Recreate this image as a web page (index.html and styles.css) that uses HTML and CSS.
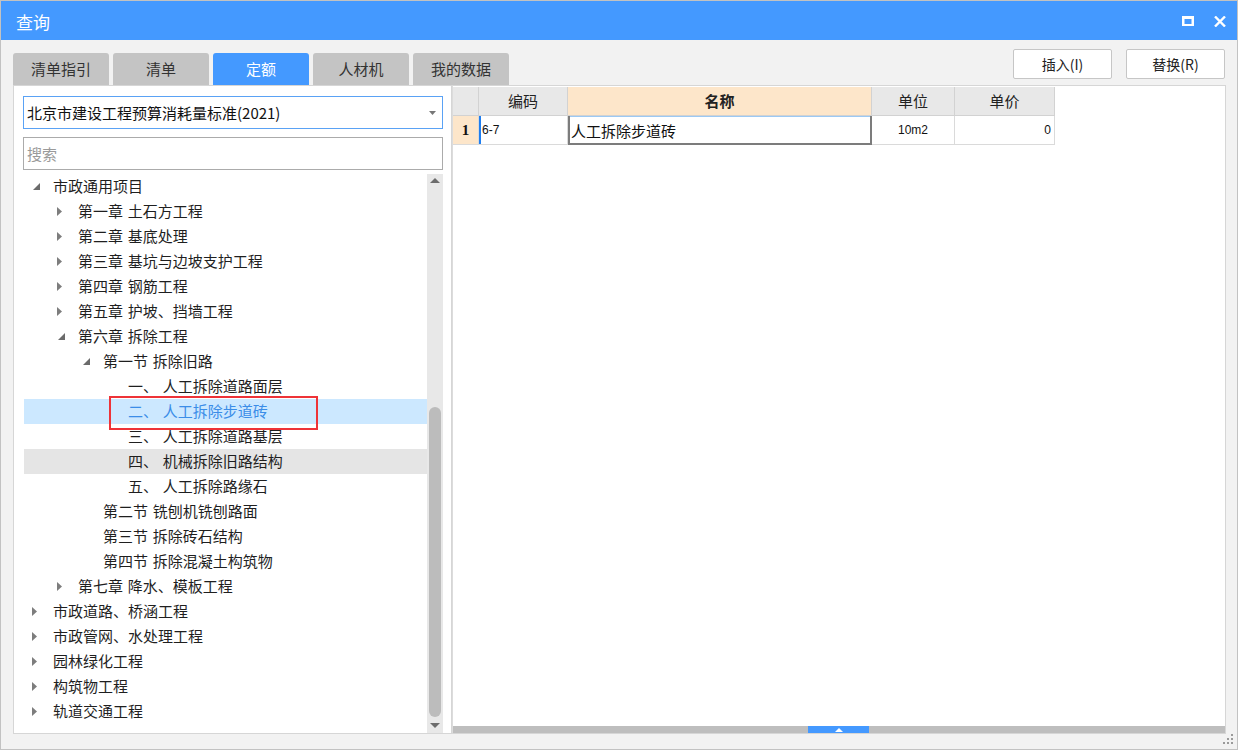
FILE: index.html
```html
<!DOCTYPE html>
<html lang="zh-CN">
<head>
<meta charset="utf-8">
<title>查询</title>
<link rel="stylesheet" href="styles.css">
</head>
<body>
<div class="window">
  <header class="titlebar">
    <span class="title">查询</span>
    <div class="win-ctrls">
      <svg class="ic-max" width="12" height="10" viewBox="0 0 12 10"><path fill="#fff" fill-rule="evenodd" d="M0 0H12V10H0Z M2.5 3H9.5V8H2.5Z"/></svg>
      <svg class="ic-close" width="12" height="11" viewBox="0 0 12 11"><path d="M1 0.5L11 10.5M11 0.5L1 10.5" stroke="#fff" stroke-width="2.4" fill="none"/></svg>
    </div>
  </header>
  <div class="body">
    <div class="toprow">
      <div class="tabs">
        <div class="tab">清单指引</div>
        <div class="tab">清单</div>
        <div class="tab active">定额</div>
        <div class="tab">人材机</div>
        <div class="tab">我的数据</div>
      </div>
      <div class="buttons">
        <div class="btn">插入(I)</div>
        <div class="btn">替换(R)</div>
      </div>
    </div>
    <div class="main">
      <div class="left">
        <div class="select">
          <span>北京市建设工程预算消耗量标准(2021)</span>
          <svg class="caret" width="7" height="4" viewBox="0 0 7 4"><path d="M0 0H7L3.5 4Z" fill="#777"/></svg>
        </div>
        <div class="search">搜索</div>
        <div class="treewrap">
          <div class="tree">
            <div class="row l0"><span class="tw"><svg class="ex" width="7" height="7" viewBox="0 0 7 7"><path d="M7 0V7H0Z" fill="#6b6b6b"/></svg></span>市政通用项目</div>
            <div class="row l1"><span class="tw"><svg class="co" width="5" height="9" viewBox="0 0 5 9"><path d="M0 0L5 4.5L0 9Z" fill="#7d7d7d"/></svg></span>第一章 土石方工程</div>
            <div class="row l1"><span class="tw"><svg class="co" width="5" height="9" viewBox="0 0 5 9"><path d="M0 0L5 4.5L0 9Z" fill="#7d7d7d"/></svg></span>第二章 基底处理</div>
            <div class="row l1"><span class="tw"><svg class="co" width="5" height="9" viewBox="0 0 5 9"><path d="M0 0L5 4.5L0 9Z" fill="#7d7d7d"/></svg></span>第三章 基坑与边坡支护工程</div>
            <div class="row l1"><span class="tw"><svg class="co" width="5" height="9" viewBox="0 0 5 9"><path d="M0 0L5 4.5L0 9Z" fill="#7d7d7d"/></svg></span>第四章 钢筋工程</div>
            <div class="row l1"><span class="tw"><svg class="co" width="5" height="9" viewBox="0 0 5 9"><path d="M0 0L5 4.5L0 9Z" fill="#7d7d7d"/></svg></span>第五章 护坡、挡墙工程</div>
            <div class="row l1"><span class="tw"><svg class="ex" width="7" height="7" viewBox="0 0 7 7"><path d="M7 0V7H0Z" fill="#6b6b6b"/></svg></span>第六章 拆除工程</div>
            <div class="row l2"><span class="tw"><svg class="ex" width="7" height="7" viewBox="0 0 7 7"><path d="M7 0V7H0Z" fill="#6b6b6b"/></svg></span>第一节 拆除旧路</div>
            <div class="row l3"><span class="tw"></span>一、 人工拆除道路面层</div>
            <div class="row l3 sel"><span class="tw"></span>二、 人工拆除步道砖</div>
            <div class="row l3"><span class="tw"></span>三、 人工拆除道路基层</div>
            <div class="row l3 hover"><span class="tw"></span>四、 机械拆除旧路结构</div>
            <div class="row l3"><span class="tw"></span>五、 人工拆除路缘石</div>
            <div class="row l2"><span class="tw"></span>第二节 铣刨机铣刨路面</div>
            <div class="row l2"><span class="tw"></span>第三节 拆除砖石结构</div>
            <div class="row l2"><span class="tw"></span>第四节 拆除混凝土构筑物</div>
            <div class="row l1"><span class="tw"><svg class="co" width="5" height="9" viewBox="0 0 5 9"><path d="M0 0L5 4.5L0 9Z" fill="#7d7d7d"/></svg></span>第七章 降水、模板工程</div>
            <div class="row l0"><span class="tw"><svg class="co" width="5" height="9" viewBox="0 0 5 9"><path d="M0 0L5 4.5L0 9Z" fill="#7d7d7d"/></svg></span>市政道路、桥涵工程</div>
            <div class="row l0"><span class="tw"><svg class="co" width="5" height="9" viewBox="0 0 5 9"><path d="M0 0L5 4.5L0 9Z" fill="#7d7d7d"/></svg></span>市政管网、水处理工程</div>
            <div class="row l0"><span class="tw"><svg class="co" width="5" height="9" viewBox="0 0 5 9"><path d="M0 0L5 4.5L0 9Z" fill="#7d7d7d"/></svg></span>园林绿化工程</div>
            <div class="row l0"><span class="tw"><svg class="co" width="5" height="9" viewBox="0 0 5 9"><path d="M0 0L5 4.5L0 9Z" fill="#7d7d7d"/></svg></span>构筑物工程</div>
            <div class="row l0"><span class="tw"><svg class="co" width="5" height="9" viewBox="0 0 5 9"><path d="M0 0L5 4.5L0 9Z" fill="#7d7d7d"/></svg></span>轨道交通工程</div>
          </div>
          <div class="vscroll">
            <svg class="sa-up" width="10" height="5" viewBox="0 0 10 5"><path d="M0 5H10L5 0Z" fill="#6c6c6c"/></svg>
            <div class="vthumb"></div>
            <svg class="sa-down" width="10" height="5" viewBox="0 0 10 5"><path d="M0 0H10L5 5Z" fill="#6c6c6c"/></svg>
          </div>
          <div class="mark"></div>
        </div>
      </div>
      <div class="right">
        <div class="grid">
          <div class="hc"></div>
          <div class="hc">编码</div>
          <div class="hc hname">名称</div>
          <div class="hc">单位</div>
          <div class="hc">单价</div>
          <div class="dc rn">1</div>
          <div class="dc code">6-7</div>
          <div class="dc name">人工拆除步道砖</div>
          <div class="dc unit">10m2</div>
          <div class="dc price">0</div>
        </div>
        <div class="fill"></div>
        <div class="hscroll">
          <div class="hthumb"><svg width="8" height="4" viewBox="0 0 8 4"><path d="M0 4H8L4 0Z" fill="#fff"/></svg></div>
        </div>
      </div>
    </div>
  </div>
  <svg class="grip" width="11" height="11" viewBox="0 0 11 11">
    <rect x="8" y="0" width="2" height="2" fill="#9a9a9a"/>
    <rect x="4" y="4" width="2" height="2" fill="#9a9a9a"/>
    <rect x="8" y="4" width="2" height="2" fill="#9a9a9a"/>
    <rect x="0" y="8" width="2" height="2" fill="#9a9a9a"/>
    <rect x="4" y="8" width="2" height="2" fill="#9a9a9a"/>
    <rect x="8" y="8" width="2" height="2" fill="#9a9a9a"/>
  </svg>
</div>
</body>
</html>
```
FILE: styles.css
```css
html, body {
  margin: 0;
  padding: 0;
}
body {
  font-family: "Noto Sans CJK SC", "Microsoft YaHei", sans-serif;
  background: #f2f2f2;
}
.window {
  width: 1238px;
  height: 750px;
  box-sizing: border-box;
  border: 1px solid #c2c2c2;
  background: #f2f2f2;
  display: flex;
  flex-direction: column;
  position: relative;
  overflow: hidden;
}
.titlebar {
  height: 39px;
  flex: none;
  background: #4499ff;
  display: flex;
  align-items: center;
  justify-content: space-between;
  padding: 0 11px 0 15px;
}
.title {
  color: #fff;
  font-size: 17px;
  line-height: 20px;
  padding-top: 2px;
}
.win-ctrls {
  display: flex;
  align-items: center;
  gap: 20px;
  padding-top: 1px;
}
.body {
  flex: 1;
  display: flex;
  flex-direction: column;
  padding: 9px 11px 15px 12px;
}
.toprow {
  height: 36px;
  flex: none;
  display: flex;
  justify-content: space-between;
}
.tabs {
  display: flex;
  gap: 4px;
  align-self: flex-end;
}
.tab {
  width: 96px;
  height: 32px;
  background: #c4c4c4;
  border-radius: 3px 3px 0 0;
  font-size: 15px;
  line-height: 20px;
  color: #333;
  display: flex;
  align-items: center;
  justify-content: center;
}
.tab.active {
  background: #4499ff;
  color: #fff;
}
.buttons {
  display: flex;
  gap: 14px;
  align-self: flex-start;
  padding-right: 1px;
}
.btn {
  width: 99px;
  height: 30px;
  box-sizing: border-box;
  border: 1px solid #c6c6c6;
  border-radius: 2px;
  background: #fff;
  font-size: 14px;
  line-height: 18px;
  color: #222;
  display: flex;
  align-items: center;
  justify-content: center;
}
.main {
  display: flex;
  height: 649px;
  flex: none;
}
.left {
  width: 439px;
  flex: none;
  box-sizing: border-box;
  border: 1px solid #d6d6d6;
  background: #fff;
  padding: 10px 8px 0 9px;
  display: flex;
  flex-direction: column;
}
.select {
  height: 33px;
  flex: none;
  box-sizing: border-box;
  border: 1px solid #5aa2f5;
  display: flex;
  align-items: center;
  justify-content: space-between;
  padding: 0 6px 0 3px;
  font-size: 15px;
  line-height: 20px;
  color: #111;
}
.search {
  margin-top: 8px;
  height: 33px;
  flex: none;
  box-sizing: border-box;
  border: 1px solid #ababab;
  color: #9a9a9a;
  font-size: 15px;
  line-height: 20px;
  padding-left: 3px;
  display: flex;
  align-items: center;
}
.treewrap {
  margin-top: 4px;
  margin-left: 1px;
  flex: 1;
  display: flex;
  position: relative;
  overflow: hidden;
}
.tree {
  flex: 1;
}
.row {
  height: 25px;
  box-sizing: border-box;
  padding-bottom: 1px;
  display: flex;
  align-items: center;
  font-size: 15px;
  line-height: 20px;
  color: #1f1f1f;
  white-space: nowrap;
  word-spacing: 1.5px;
}
.row.l1 { padding-left: 25px; }
.row.l2 { padding-left: 50px; }
.row.l3 { padding-left: 75px; }
.tw {
  width: 29px;
  flex: none;
  display: flex;
  align-items: center;
}
.tw .co { margin-left: 8px; }
.tw .ex { margin-left: 9px; }
.row.sel {
  background: #cce8ff;
  color: #3b8de8;
}
.row.hover {
  background: #e5e5e5;
}
.vscroll {
  width: 16px;
  flex: none;
  background: #e8e8e8;
  display: flex;
  flex-direction: column;
  align-items: center;
}
.sa-up { margin-top: 4px; flex: none; }
.vthumb {
  margin-top: 224px;
  width: 12px;
  height: 310px;
  border-radius: 6px;
  background: #bcbcbc;
  flex: none;
}
.sa-down { margin-top: 6px; flex: none; }
.mark {
  position: absolute;
  left: 85px;
  top: 222px;
  width: 209px;
  height: 34px;
  box-sizing: border-box;
  border: 2px solid #ee3338;
}
.right {
  flex: 1;
  box-sizing: border-box;
  border: 1px solid #d6d6d6;
  border-left-color: #dcdcdc;
  background: #fff;
  display: flex;
  flex-direction: column;
  padding-top: 1px;
}
.grid {
  display: grid;
  grid-template-columns: 26px 89px 304px 83px 100px;
  grid-auto-rows: 29px;
}
.hc {
  background: #e8e8e8;
  border-right: 1px solid #d2d2d2;
  border-bottom: 1px solid #d2d2d2;
  box-sizing: border-box;
  font-size: 15px;
  line-height: 20px;
  color: #222;
  display: flex;
  align-items: center;
  justify-content: center;
}
.hc.hname {
  background: #fde6ca;
  font-weight: bold;
}
.dc {
  border-right: 1px solid #dadada;
  border-bottom: 1px solid #dadada;
  box-sizing: border-box;
  display: flex;
  align-items: center;
  color: #111;
}
.dc.rn {
  background: #fde6ca;
  font-family: "Liberation Serif", serif;
  font-weight: bold;
  font-size: 15px;
  justify-content: center;
}
.dc.code {
  box-shadow: inset 2px 0 #1f7ef0;
  padding-left: 3px;
  font-family: "Liberation Sans", sans-serif;
  font-size: 12px;
}
.dc.name {
  font-size: 15px;
  line-height: 20px;
  padding-left: 3px;
  border: none;
  box-shadow: inset 2px 0 #7c7c7c, inset -2px 0 #7c7c7c, inset 0 -2px #7c7c7c, inset 0 1px #9cc9f4;
}
.dc.unit {
  justify-content: center;
  font-family: "Liberation Sans", sans-serif;
  font-size: 12px;
}
.dc.price {
  justify-content: flex-end;
  padding-right: 3px;
  font-family: "Liberation Sans", sans-serif;
  font-size: 12px;
}
.fill {
  flex: 1;
}
.hscroll {
  height: 7px;
  flex: none;
  background: #bebebe;
  display: flex;
}
.hthumb {
  margin-left: 355px;
  width: 61px;
  height: 7px;
  background: #4499ff;
  display: flex;
  align-items: center;
  justify-content: center;
}
.grip {
  position: absolute;
  right: 3px;
  bottom: 4px;
}
```
